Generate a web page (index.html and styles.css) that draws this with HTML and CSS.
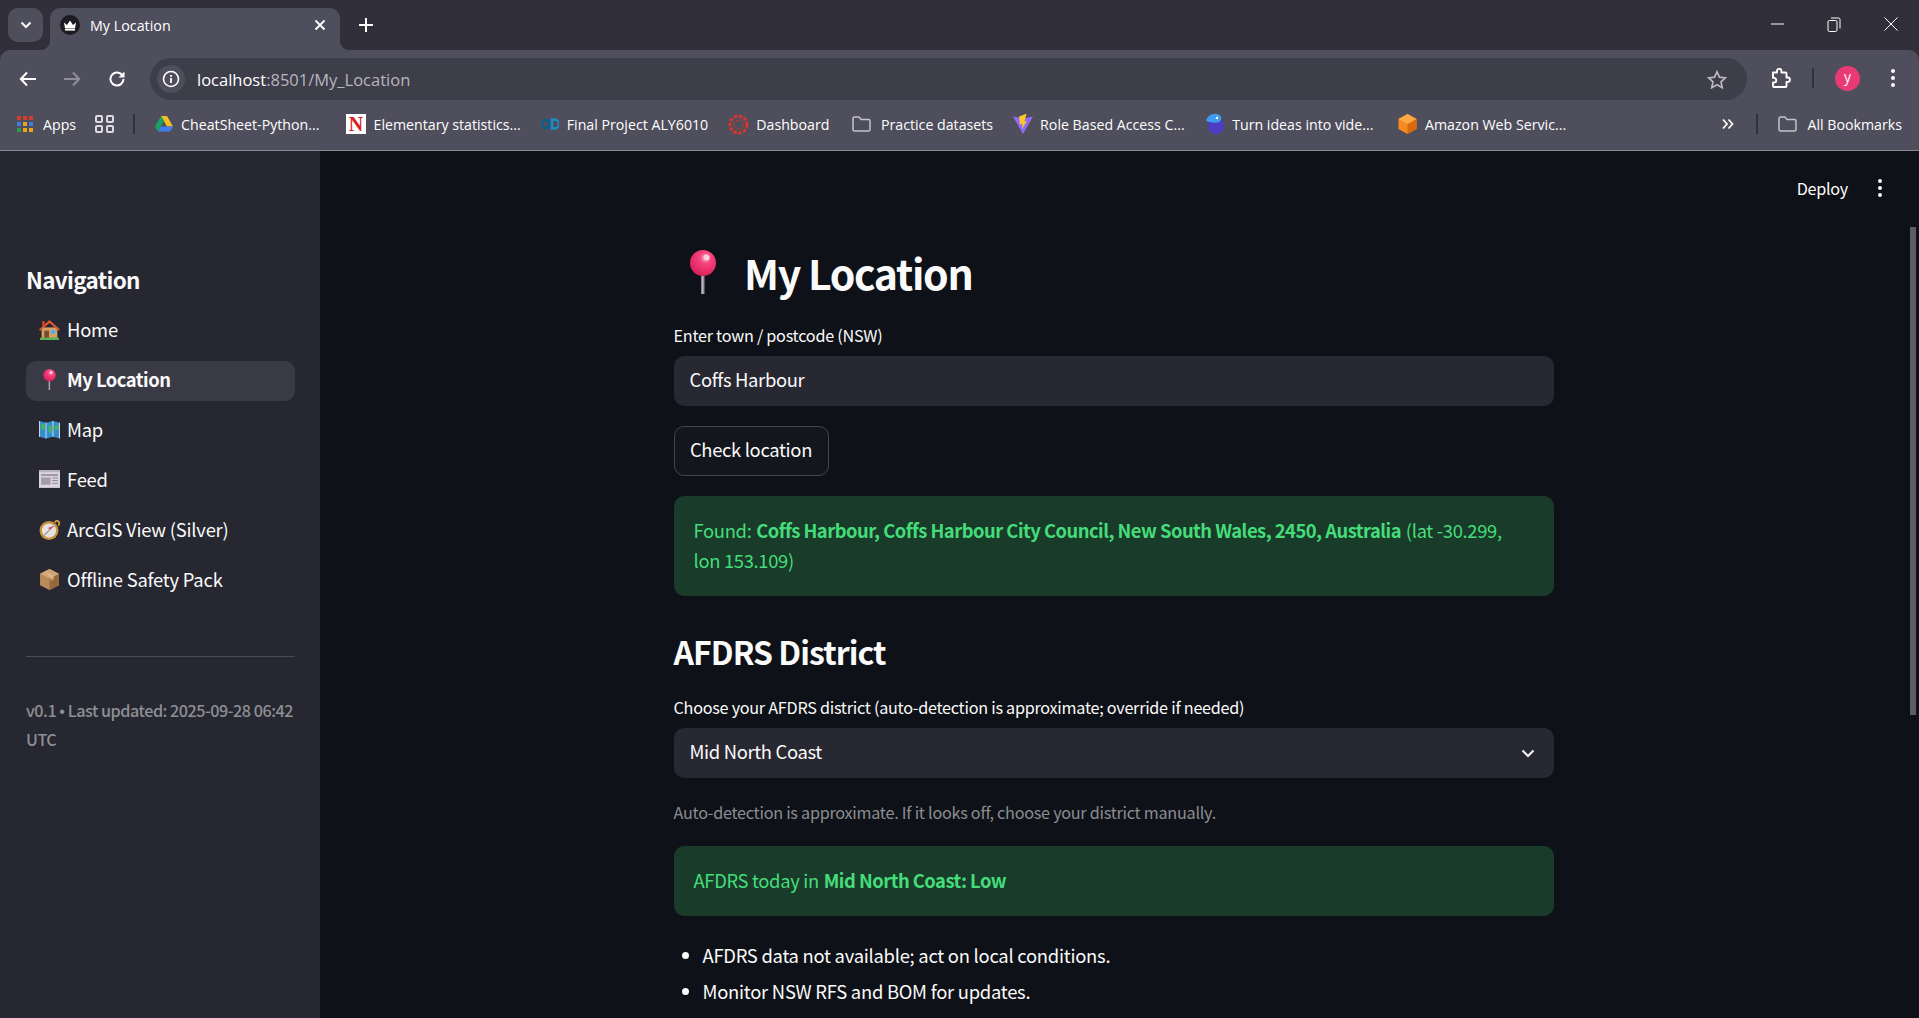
FILE: index.html
```html
<!DOCTYPE html>
<html lang="en">
<head>
<meta charset="utf-8">
<title>My Location</title>
<link rel="stylesheet" href="styles.css">
</head>
<body>
<svg class="defs" width="0" height="0" aria-hidden="true">
  <defs>
    <radialGradient id="pinball" cx="0.6" cy="0.3" r="0.75">
      <stop offset="0" stop-color="#ffb3c8"/><stop offset="0.3" stop-color="#f5447f"/><stop offset="1" stop-color="#d81b55"/>
    </radialGradient>
    <linearGradient id="pinstem" x1="0" x2="1" y1="0" y2="0">
      <stop offset="0" stop-color="#d9d3e0"/><stop offset="1" stop-color="#7d7488"/>
    </linearGradient>
    <symbol id="pin" viewBox="0 0 40 44">
      <rect x="18.4" y="20" width="3.2" height="24" fill="url(#pinstem)"/>
      <circle cx="20" cy="13" r="13" fill="url(#pinball)"/>
      <circle cx="23.5" cy="7.5" r="3" fill="#ffd2df"/>
    </symbol>
    <symbol id="folder" viewBox="0 0 20 18">
      <path d="M1.5 3.5a1.5 1.5 0 0 1 1.5-1.5h4.5l2 2.5H17a1.5 1.5 0 0 1 1.5 1.5v8.5a1.5 1.5 0 0 1-1.5 1.5H3a1.5 1.5 0 0 1-1.5-1.5z" fill="none" stroke="#c4c4c9" stroke-width="1.5"/>
    </symbol>
  </defs>
</svg>

<header class="chrome">
  <div class="tabstrip">
    <button class="tabsearch"><svg width="12" height="8" viewBox="0 0 12 8"><path d="M1.5 1.5 6 6l4.5-4.5" fill="none" stroke="#fff" stroke-width="2"/></svg></button>
    <div class="tab">
      <span class="favicon"><svg width="14" height="11" viewBox="0 0 14 11"><path d="M1 2.5 4 5l3-4.5L10 5l3-2.5-1 6H2z" fill="#fff"/><rect x="2" y="9" width="10" height="1.6" fill="#fff"/></svg></span>
      <span class="tabtitle">My Location</span>
      <svg class="tabclose" width="12" height="12" viewBox="0 0 12 12"><path d="M1.5 1.5l9 9m0-9l-9 9" stroke="#fff" stroke-width="1.8"/></svg>
    </div>
    <svg class="newtab" width="14" height="14" viewBox="0 0 14 14"><path d="M7 0v14M0 7h14" stroke="#fff" stroke-width="2"/></svg>
    <div class="winctl">
      <svg width="13" height="2" viewBox="0 0 13 2"><path d="M0 1h13" stroke="#fff" stroke-width="1"/></svg>
      <svg width="14" height="15" viewBox="0 0 14 15"><rect x="1" y="3.500" width="9" height="11" rx="1.500" fill="none" stroke="#fff"/><path d="M4 1h7.500A1.500 1.500 0 0 1 13 2.500v9" fill="none" stroke="#fff"/></svg>
      <svg width="14" height="14" viewBox="0 0 14 14"><path d="M.5.5l13 13m0-13l-13 13" stroke="#fff"/></svg>
    </div>
  </div>

  <div class="toolbar">
    <svg class="navicon nav-back" width="18" height="16" viewBox="0 0 18 16"><path d="M17 8H2m6-6.500L1.800 8 8 14.500" fill="none" stroke="#fff" stroke-width="2"/></svg>
    <svg class="navicon" width="18" height="16" viewBox="0 0 18 16"><path d="M1 8h15m-6-6.500L16.200 8 10 14.500" fill="none" stroke="#8f8e98" stroke-width="2"/></svg>
    <svg class="navicon nav-reload" width="18" height="18" viewBox="0 0 18 18"><path d="M15.500 9a6.500 6.500 0 1 1-2-4.700L15.500 6.300" fill="none" stroke="#fff" stroke-width="2"/><path d="M16.500 1.500v6h-6z" fill="#fff"/></svg>
    <div class="omnibox">
      <span class="infobubble"><svg width="18" height="18" viewBox="0 0 18 18"><circle cx="9" cy="9" r="7.500" fill="none" stroke="#fff" stroke-width="1.600"/><rect x="8.100" y="8" width="1.800" height="5" fill="#fff"/><rect x="8.100" y="5" width="1.800" height="1.800" fill="#fff"/></svg></span>
      <span class="url">localhost<span class="urldim">:8501/My_Location</span></span>
      <svg class="star" width="20" height="19" viewBox="0 0 20 19"><path d="M10 1.800l2.500 5.400 5.900.7-4.400 4 1.200 5.800L10 14.800l-5.200 2.900L6 11.900l-4.400-4 5.900-.7z" fill="none" stroke="#b9b8bf" stroke-width="1.700"/></svg>
    </div>
    <svg class="puzzle" width="20" height="20" viewBox="0 0 20 20"><path d="M2 4.500h4V3a2.200 2.200 0 0 1 4.400 0v1.500h4.100a1 1 0 0 1 1 1v4h1.200a2.200 2.200 0 0 1 0 4.400h-1.200V18a1 1 0 0 1-1 1H3a1 1 0 0 1-1-1v-3.500h1a2.300 2.300 0 0 0 0-4.600H2z" fill="none" stroke="#fff" stroke-width="1.900" stroke-linejoin="round"/></svg>
    <span class="tbsep"></span>
    <span class="avatar">y</span>
    <span class="kebab light"><i></i><i></i><i></i></span>
  </div>

  <nav class="bookmarks">
    <div class="bm bm-apps">
      <svg width="16" height="16" viewBox="0 0 16 16"><g><rect width="4" height="4" fill="#d93a2e"/><rect x="6" width="4" height="4" fill="#d93a2e"/><rect x="12" width="4" height="4" fill="#d93a2e"/><rect y="6" width="4" height="4" fill="#3d7de6"/><rect x="6" y="6" width="4" height="4" fill="#e8a81c"/><rect x="12" y="6" width="4" height="4" fill="#3d7de6"/><rect y="12" width="4" height="4" fill="#2e9c4f"/><rect x="6" y="12" width="4" height="4" fill="#e8a81c"/><rect x="12" y="12" width="4" height="4" fill="#e8a81c"/></g></svg>
      <span>Apps</span>
    </div>
    <svg class="bm-grid" width="19" height="18" viewBox="0 0 19 18"><g fill="none" stroke="#dcdce0" stroke-width="2"><rect x="1" y="1" width="6" height="6" rx="1"/><rect x="12" y="1" width="6" height="6" rx="1"/><rect x="1" y="11" width="6" height="6" rx="1"/><rect x="12" y="11" width="6" height="6" rx="1"/></g></svg>
    <span class="bmsep"></span>
    <div class="bm bm-1">
      <svg width="18" height="16" viewBox="0 0 18 16"><path d="M6 0h6l6 10.500h-6z" fill="#f4bd23"/><path d="M6 0l3 5.300-6 10.200L0 10.500z" fill="#1ba261"/><path d="M6 10.500h12L15 15.500H3z" fill="#3f7fee"/></svg>
      <span>CheatSheet-Python...</span>
    </div>
    <div class="bm bm-2">
      <svg width="20" height="20" viewBox="0 0 20 20"><rect width="20" height="20" fill="#fff"/><text x="10" y="17" class="nglyph">N</text></svg>
      <span>Elementary statistics...</span>
    </div>
    <div class="bm bm-3">
      <svg width="18" height="12" viewBox="0 0 18 12"><circle cx="5" cy="6" r="4" fill="none" stroke="#0e5f8a" stroke-width="2.500"/><path d="M11 1.500h2.500a4.500 4.500 0 0 1 0 9H11z" fill="none" stroke="#1a8fc4" stroke-width="2.500"/></svg>
      <span>Final Project ALY6010</span>
    </div>
    <div class="bm bm-4">
      <svg width="21" height="21" viewBox="0 0 21 21"><circle cx="10.500" cy="10.500" r="8.500" fill="none" stroke="#d8352c" stroke-width="3" stroke-dasharray="3.500 1.500"/><circle cx="10.500" cy="10.500" r="4.500" fill="none" stroke="#d8352c" stroke-width="1.300" stroke-dasharray="1.500 1.500"/></svg>
      <span>Dashboard</span>
    </div>
    <div class="bm bm-5">
      <svg width="21" height="18"><use href="#folder"/></svg>
      <span>Practice datasets</span>
    </div>
    <div class="bm bm-6">
      <svg width="20" height="20" viewBox="0 0 20 20"><path d="M0 2.500l10 2 10-2L10 20z" fill="#8f6cf5"/><path d="M12.500 0L6 2.500l1 8 2.500-.5-.5 5 5-8-2.500.5L13.500 0z" fill="#fcc72b"/></svg>
      <span>Role Based Access C...</span>
    </div>
    <div class="bm bm-7">
      <svg width="20" height="22" viewBox="0 0 20 22"><ellipse cx="11" cy="13" rx="8" ry="8.500" fill="#4d3cc4"/><path d="M1 8c1-5 6-8 11-7 3 .6 5 3 4 6-2 4-8 3-15 1z" fill="#3f9bf0"/><circle cx="12" cy="5" r="1.200" fill="#fff"/></svg>
      <span>Turn ideas into vide...</span>
    </div>
    <div class="bm bm-8">
      <svg width="19" height="20" viewBox="0 0 19 20"><path d="M9.500 0l9 5v10l-9 5-9-5V5z" fill="#f78b1e"/><path d="M9.500 10l9-5v10l-9 5z" fill="#d9690f"/><path d="M9.500 0l9 5-9 5-9-5z" fill="#fba842"/></svg>
      <span>Amazon Web Servic...</span>
    </div>
    <svg class="chev" width="12" height="12" viewBox="0 0 12 12"><path d="M1 1.500 5 6l-4 4.500M6.500 1.500l4 4.500-4 4.500" fill="none" stroke="#fff" stroke-width="1.700"/></svg>
    <span class="bmsep bmsep-end"></span>
    <div class="bm bm-all">
      <svg width="21" height="18"><use href="#folder"/></svg>
      <span>All Bookmarks</span>
    </div>
  </nav>
</header>

<div class="app">
  <aside class="sidebar">
    <h2 class="navtitle">Navigation</h2>
    <ul class="navlist">
      <li class="navitem">
        <svg class="emoji" viewBox="0 0 20 20"><rect x="2.500" y="8" width="15" height="10" fill="#d9a066"/><path d="M10 1L0 10l1.200 1.200L10 3.800l8.800 7.400L20 10z" fill="#e4572e"/><rect x="3" y="2" width="2.500" height="5" fill="#c74526"/><rect x="5" y="11" width="4.500" height="7" fill="#7a4a2c"/><rect x="11.500" y="10.500" width="4" height="3.500" fill="#43b4f0"/><rect x="1" y="17.800" width="18" height="2.200" fill="#55b35a"/></svg>
        <span>Home</span>
      </li>
      <li class="navitem active">
        <svg class="emoji"><use href="#pin"/></svg>
        <span>My Location</span>
      </li>
      <li class="navitem">
        <svg class="emoji" viewBox="0 0 20 20"><path d="M0 2l6.700 1.500L13.300 2 20 3.500v15l-6.700-1.500L6.700 18.500 0 17z" fill="#2f8fd0"/><path d="M6.700 3.500v15M13.300 2v15" stroke="#cfd3de" stroke-width="1"/><path d="M2 5h4v4l-2 2-2-2zM9 6l4 1v4l-2 3-2-3zM15 6h4v4h-4z" fill="#4caf6b"/><path d="M0 2v15l1 .2V2.200zM19 3.300V18.300l1 .2V3.500z" fill="#cfd3de"/></svg>
        <span>Map</span>
      </li>
      <li class="navitem">
        <svg class="emoji" viewBox="0 0 20 20"><rect x="0" y="1" width="20" height="17" fill="#d9d4de"/><rect x="0" y="1" width="20" height="2" fill="#b8b1bf"/><rect x="2" y="5" width="16" height="1.500" fill="#8e8895"/><rect x="2" y="8" width="9" height="7" fill="#a39daa"/><path d="M12.500 8.500H18M12.500 11H18M12.500 13.500H18" stroke="#8e8895"/></svg>
        <span>Feed</span>
      </li>
      <li class="navitem">
        <svg class="emoji" viewBox="0 0 20 20"><circle cx="9.500" cy="11" r="9" fill="#c9923a"/><circle cx="9.500" cy="11" r="6.800" fill="#e6e2e2"/><path d="M14 6.500l-3.500 3.500-2 2L5 15.500l3.500-3.500 2-2z" fill="#8b8790" stroke="#8b8790"/><path d="M14 6.500l-3.500 3.500-2-1.500z" fill="#d9485f"/><path d="M15 3.500a2.200 2.200 0 1 1 3 2.500" fill="none" stroke="#d9a441" stroke-width="1.600"/></svg>
        <span>ArcGIS View (Silver)</span>
      </li>
      <li class="navitem">
        <svg class="emoji" viewBox="0 0 20 20"><path d="M10 0l9 4.500v11L10 20l-9-4.500v-11z" fill="#b98a5a"/><path d="M10 9l9-4.500v11L10 20z" fill="#96683d"/><path d="M10 0l9 4.500L10 9 1 4.500z" fill="#d0a474"/><path d="M5 2.200l9 4.500v3l-3 1.500V8z" fill="#e3c39b" opacity=".7"/></svg>
        <span>Offline Safety Pack</span>
      </li>
    </ul>
    <hr class="sidedivider">
    <p class="sidecaption">v0.1 <span class="dot">•</span> Last updated: 2025-09-28 06:42 UTC</p>
  </aside>

  <main class="main">
    <div class="topbar">
      <span class="deploy">Deploy</span>
      <span class="kebab"><i></i><i></i><i></i></span>
    </div>
    <div class="scrollthumb"></div>
    <div class="content">
      <h1 class="title"><svg class="titlepin"><use href="#pin"/></svg><span class="titletext">My Location</span></h1>
      <label class="fieldlabel">Enter town / postcode (NSW)</label>
      <div class="field">Coffs Harbour</div>
      <button class="btn">Check location</button>
      <div class="alert alert-found">Found: <strong>Coffs Harbour, Coffs Harbour City Council, New South Wales, 2450, Australia</strong> (lat -30.299, lon 153.109)</div>
      <h2 class="section">AFDRS District</h2>
      <label class="fieldlabel">Choose your AFDRS district (auto-detection is approximate; override if needed)</label>
      <div class="field field-select">
        <span>Mid North Coast</span>
        <svg width="14" height="9" viewBox="0 0 14 9"><path d="M1.500 1.500L7 7l5.500-5.500" fill="none" stroke="#fafafa" stroke-width="2"/></svg>
      </div>
      <p class="caption">Auto-detection is approximate. If it looks off, choose your district manually.</p>
      <div class="alert alert-level">AFDRS today in <strong>Mid North Coast: Low</strong></div>
      <ul class="bullets">
        <li>AFDRS data not available; act on local conditions.</li>
        <li>Monitor NSW RFS and BOM for updates.</li>
      </ul>
    </div>
  </main>
</div>
</body>
</html>
```

FILE: styles.css
```css
* { box-sizing: border-box; }
html, body { margin: 0; padding: 0; height: 100%; overflow: hidden; }
body { width: 1919px; height: 1018px; background: #0e1117; color: #fafafa; font-family: "Noto Sans CJK SC", "Noto Sans", sans-serif; display: flex; flex-direction: column; }
.defs { position: absolute; }

/* browser chrome */
.chrome { flex: none; height: 151px; background: #302f3a; font-family: "Open Sans", "Noto Sans", sans-serif; color: #fff; border-bottom: 1px solid #8a8a92; }
.tabstrip { height: 50px; display: flex; align-items: flex-start; padding-left: 8px; }
.tabsearch { width: 35px; height: 34px; margin-top: 8px; background: #4f4e5c; border: 0; border-radius: 10px; display: flex; align-items: center; justify-content: center; padding: 0; }
.tab { position: relative; width: 290px; height: 42px; margin-top: 8px; margin-left: 7px; background: #4f4e5c; border-radius: 10px 10px 0 0; display: flex; align-items: center; padding: 0 14px 8px 10px; }
.tab::before, .tab::after { content: ""; position: absolute; bottom: 0; width: 10px; height: 10px; }
.tab::before { left: -10px; background: radial-gradient(circle at 0 0, transparent 10px, #4f4e5c 10.500px); }
.tab::after { right: -10px; background: radial-gradient(circle at 100% 0, transparent 10px, #4f4e5c 10.500px); }
.favicon { width: 20px; height: 20px; background: #1c1b22; border-radius: 50%; display: flex; align-items: center; justify-content: center; }
.tabtitle { margin-left: 10px; font-size: 14.300px; flex: 1; }
.tabclose { flex: none; }
.newtab { margin: 18px 0 0 19px; }
.winctl { margin-left: auto; margin-top: 17px; height: 14px; padding-right: 21px; display: flex; align-items: center; gap: 43px; }

.toolbar { height: 50px; padding: 8px 0 0 19px; background: #4f4e5c; border-radius: 10px 10px 0 0; display: flex; align-items: center; }
.navicon { flex: none; margin-right: 27px; }
.nav-back { margin-right: 26px; }
.nav-reload { margin-right: 24px; }
.omnibox { flex: none; width: 1597px; height: 42px; background: #3e3d4a; border-radius: 21px; display: flex; align-items: center; padding: 0 20px 0 7px; }
.infobubble { width: 28px; height: 28px; border-radius: 50%; background: #4f4e5c; display: flex; align-items: center; justify-content: center; flex: none; }
.url { margin-left: 12px; font-size: 16.500px; flex: 1; white-space: nowrap; }
.urldim { color: #b7b6bd; }
.puzzle { margin-left: 24px; flex: none; margin-bottom: 2px; }
.tbsep { width: 2px; height: 20px; background: #33323c; margin-left: 21px; flex: none; margin-bottom: 2px; }
.avatar { width: 25px; height: 25px; border-radius: 50%; background: #ea3a75; font-size: 14px; line-height: 21px; text-align: center; margin: 0 0 2px 21px; flex: none; }
.kebab { display: flex; flex-direction: column; align-items: center; gap: 3px; width: 4px; }
.kebab i { width: 4px; height: 4px; border-radius: 50%; background: #fafafa; display: block; }
.kebab.light { margin: 0 0 2px 31px; }

.bookmarks { height: 50px; background: #4f4e5c; display: flex; align-items: center; padding: 0 0 2px 17px; font-size: 14.200px; white-space: nowrap; }
.bm { display: flex; align-items: center; gap: 8px; flex: none; }
.bm svg { flex: none; }
.bm-apps { gap: 10px; }
.bm-grid { margin-left: 19px; flex: none; }
.bmsep { width: 2px; height: 20px; background: #33323c; margin-left: 19px; flex: none; }
.bm-1 { margin-left: 20px; }
.bm-2 { margin-left: 26px; }
.bm-3 { margin-left: 20px; }
.bm-4 { margin-left: 20px; gap: 7px; }
.bm-5 { margin-left: 22px; gap: 8.500px; }
.bm-6 { margin-left: 20px; gap: 7px; }
.bm-7 { margin-left: 20px; gap: 7.500px; }
.bm-8 { margin-left: 25px; gap: 7.500px; }
.chev { margin-left: auto; flex: none; }
.bmsep-end { margin-left: 22px; }
.bm-all { margin-left: 19px; margin-right: 17px; gap: 9px; }
.nglyph { font-family: "Liberation Serif", serif; font-size: 20px; font-weight: 700; fill: #d8231f; text-anchor: middle; }

/* app */
.app { flex: 1; min-height: 0; display: flex; }
.sidebar { flex: none; width: 320px; background: #262730; padding: 0 25px 0 26px; }
.navtitle { margin: 112px 0 0; font-size: 22.500px; line-height: 32px; font-weight: 700; letter-spacing: -.03em; color: #fafafa; }
.navlist { list-style: none; margin: 16px 0 0; padding: 0; }
.navitem { height: 40px; margin-bottom: 10px; border-radius: 10px; display: flex; align-items: center; padding: 0 0 4px 13px; font-size: 18.400px; letter-spacing: -.012em; color: #fafafa; }
.navitem.active { background: #3a3a47; font-weight: 700; letter-spacing: -.027em; }
.emoji { width: 21px; height: 21px; margin-right: 7px; flex: none; }
.sidedivider { margin: 55px 0 0; border: 0; border-top: 1px solid #4a4b55; }
.sidecaption { margin: 39px -8px 0 0; font-size: 16.200px; line-height: 28px; font-weight: 500; letter-spacing: -.03em; color: #8e8f95; }
.dot { font-family: "Liberation Sans", sans-serif; }

.main { flex: 1; min-width: 0; position: relative; padding-right: 12px; overflow: hidden; }
.topbar { position: absolute; top: 25px; right: 37px; height: 24px; display: flex; align-items: center; gap: 30px; font-size: 16.200px; letter-spacing: -.016em; }
.scrollthumb { position: absolute; top: 76px; right: 3px; width: 6px; height: 488px; background: #5c5d63; }
.content { width: 880px; margin: 0 auto; padding-top: 93px; }
.title { margin: 0; height: 60px; display: flex; align-items: center; font-size: 41px; line-height: 60px; font-weight: 700; letter-spacing: -.032em; color: #fafafa; }
.titletext { margin-bottom: 5px; }
.titlepin { width: 40px; height: 44px; margin: -4px 21px 0 9.500px; flex: none; }
.fieldlabel { display: block; margin-top: 21px; font-size: 16.200px; line-height: 20px; letter-spacing: -.016em; color: #fafafa; }
.field { margin-top: 11px; height: 50px; background: #282832; border-radius: 10px; padding: 0 16px 4px; display: flex; align-items: center; font-size: 18.400px; letter-spacing: -.018em; color: #fafafa; }
.field-select { justify-content: space-between; padding: 0 19px 0 16px; }
.field-select span { margin-bottom: 4px; }
.btn { display: block; margin-top: 20px; height: 50px; width: 155px; padding: 0 0 4px; background: #13161d; border: 1px solid #44464d; border-radius: 10px; color: #fafafa; font: inherit; font-size: 18.400px; letter-spacing: -.018em; }
.alert { background: #193b2a; color: #45dd7a; border-radius: 10px; padding: 19px 30px 21px 20px; font-size: 18.400px; line-height: 30px; letter-spacing: -.018em; }
.alert strong { font-weight: 700; letter-spacing: -.028em; margin: 0 1px; }
.alert-found { margin-top: 20px; height: 100px; }
.alert-level { margin-top: 19px; height: 70px; }
.section { margin: 27px 0 0; height: 60px; font-size: 32px; line-height: 56px; font-weight: 700; letter-spacing: -.03em; color: #fafafa; }
.section + .fieldlabel { margin-top: 14px; }
.caption { margin: 19px 0 0; font-size: 16.200px; line-height: 30px; letter-spacing: -.016em; color: #8b8d91; }
.bullets { margin: 24px 0 0; padding: 0 0 0 29px; font-size: 18.400px; line-height: 30px; letter-spacing: -.014em; }
.bullets li { margin-bottom: 6px; }
```
